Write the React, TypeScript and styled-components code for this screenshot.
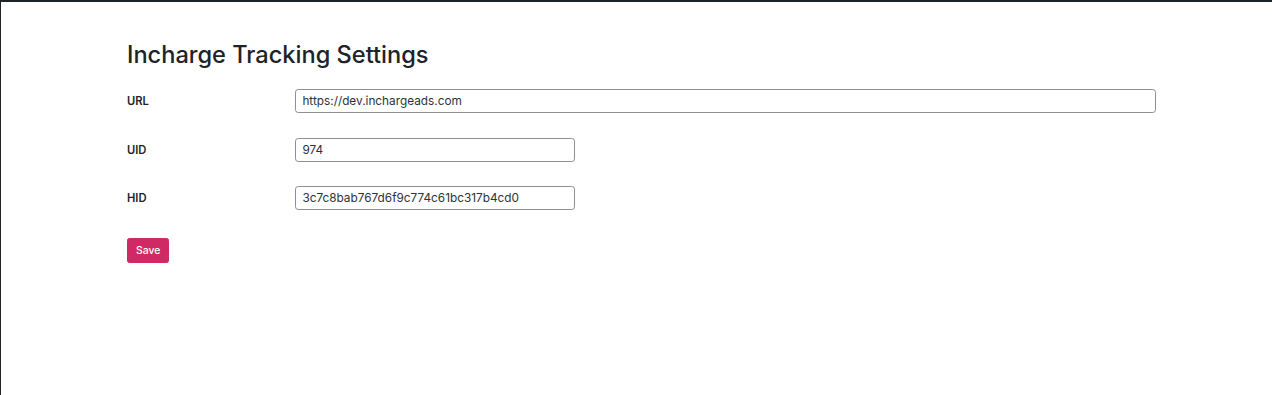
import React from "react";
import styled, { createGlobalStyle } from "styled-components";

const Global = createGlobalStyle`
  html, body { margin: 0; padding: 0; background: #fff; }
  body { font-family: Inter, "Noto Sans", sans-serif; color: #1d2327; }
  * { box-sizing: border-box; }
`;

const Frame = styled.div`
  height: 395px;
  border-top: 2px solid #1d2327;
  border-left: 1px solid #1d2327;
  padding: 38px 0 0 126px;
`;

const Title = styled.h1`
  margin: 0 0 7px;
  font-size: 23.6px;
  line-height: 30px;
  font-weight: 500;
  color: #1d2327;
  letter-spacing: 0;
`;

const Form = styled.form`
  display: flex;
  flex-direction: column;
`;

const Row = styled.div`
  display: grid;
  grid-template-columns: 168px 1fr;
  align-items: center;
  padding: 12px 0;
  height: 48.5px;
`;

const Label = styled.label`
  font-size: 11.2px;
  font-weight: 600;
  color: #1d2327;
`;

const Input = styled.input<{ $wide?: boolean }>`
  width: ${(p) => (p.$wide ? "861px" : "280px")};
  height: 24px;
  padding: 0 6.4px;
  border: 1px solid #8c8f94;
  border-radius: 3.2px;
  font-family: Inter, "Noto Sans", sans-serif;
  font-size: 11.8px;
  color: #2c3338;
  background: #fff;
  outline: none;
`;

const Actions = styled.div`
  padding-top: 15px;
`;

const Button = styled.button`
  height: 25px;
  padding: 0 8px;
  border: 1px solid #cf2a63;
  border-radius: 2.4px;
  background: #cf2a63;
  color: #fff;
  font-family: Inter, "Noto Sans", sans-serif;
  font-size: 10.4px;
  font-weight: 500;
  cursor: pointer;
`;

export default function App() {
  return (
    <>
      <Global />
      <Frame>
        <Title>Incharge Tracking Settings</Title>
        <Form onSubmit={(e) => e.preventDefault()}>
          <Row>
            <Label htmlFor="url">URL</Label>
            <Input id="url" $wide defaultValue="https://dev.inchargeads.com" />
          </Row>
          <Row>
            <Label htmlFor="uid">UID</Label>
            <Input id="uid" defaultValue="974" />
          </Row>
          <Row>
            <Label htmlFor="hid">HID</Label>
            <Input id="hid" defaultValue="3c7c8bab767d6f9c774c61bc317b4cd0" />
          </Row>
          <Actions>
            <Button type="submit">Save</Button>
          </Actions>
        </Form>
      </Frame>
    </>
  );
}
